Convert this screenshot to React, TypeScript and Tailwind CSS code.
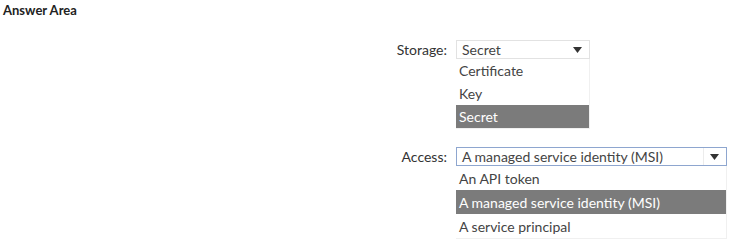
import React from "react";

interface DropProps {
  label: string;
  value: string;
  options: string[];
  width: string;
  itemH: string;
  focused?: boolean;
}

const Arrow = () => (
  <svg className="w-[9px] h-[6px]" viewBox="0 0 9 6">
    <path d="M0 0h9L4.5 6z" fill="#333" />
  </svg>
);

const Dropdown = ({ label, value, options, width, itemH, focused }: DropProps) => {
  return (
    <div className="flex items-start">
      <div className="w-[447px] text-right text-[14px] leading-[19px] text-[#333]">
        {label}
      </div>
      <div className={`ml-[9px] ${width}`}>
        {/* Select box */}
        <div
          className={`h-[19px] flex items-center justify-between pl-[5px] pr-[7px] border ${
            focused ? "border-[#8ea6cf]" : "border-[#e2e2e2]"
          }`}
        >
          <span className="text-[14px] leading-[17px] text-[#444]">{value}</span>
          <div className={`h-full flex items-center ${focused ? "border-l border-[#ececec] pl-[6px]" : ""}`}>
            <Arrow />
          </div>
        </div>
        {/* Options list */}
        <ul className="border-r border-b border-[#f0f0f0]">
          {options.map((opt, i) => (
            <li
              key={i}
              className={`${itemH} flex items-center pl-[3px] text-[14px] ${
                opt === value ? "bg-[#7b7b7b] text-white" : "text-[#444]"
              }`}
            >
              {opt}
            </li>
          ))}
        </ul>
      </div>
    </div>
  );
};

export default function App() {
  return (
    <div className="w-[736px] h-[242px] bg-white font-['Lato',sans-serif]">
      <div className="pl-[3px] pt-[2px] text-[13px] font-bold text-[#222] leading-[16px]">
        Answer Area
      </div>
      <div className="mt-[22px]">
        <Dropdown
          label="Storage:"
          value="Secret"
          options={["Certificate", "Key", "Secret"]}
          width="w-[134px]"
          itemH="h-[23px]"
        />
      </div>
      <div className="mt-[18px]">
        <Dropdown
          label="Access:"
          value="A managed service identity (MSI)"
          options={["An API token", "A managed service identity (MSI)", "A service principal"]}
          width="w-[271px]"
          itemH="h-[24px]"
          focused
        />
      </div>
    </div>
  );
}
